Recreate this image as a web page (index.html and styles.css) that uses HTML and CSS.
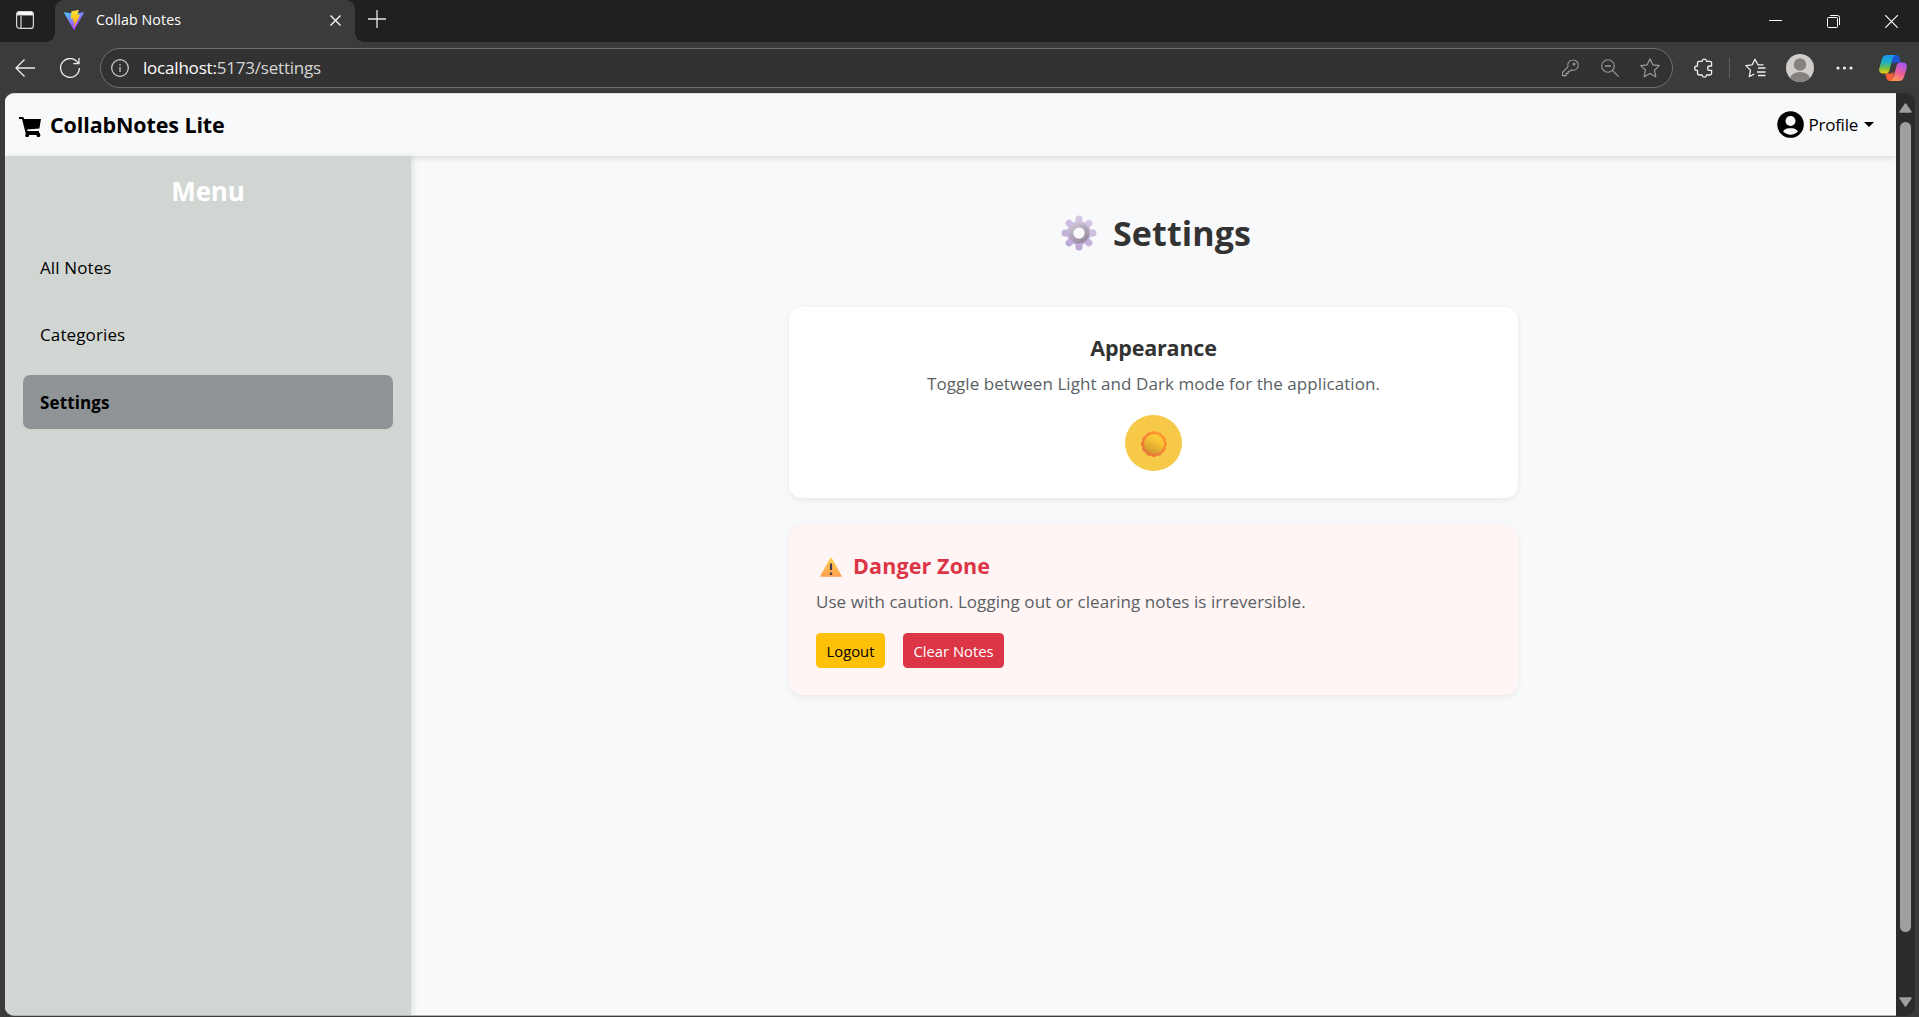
FILE: index.html
```html
<!DOCTYPE html>
<html lang="en">
<head>
<meta charset="utf-8">
<title>Collab Notes</title>
<link rel="stylesheet" href="styles.css">
</head>
<body>
<header class="tabstrip">
  <button class="tab-actions" aria-label="Tab actions">
    <svg width="20" height="20" viewBox="0 0 20 20" fill="none" stroke="#d8d8d8" stroke-width="1.2"><rect x="1.6" y="1.6" width="16.8" height="16.8" rx="3"/><path d="M2 5h16V4a2.400 2.400 0 0 0-2.400-2.400H4.400A2.400 2.400 0 0 0 2 4z" fill="#fff"/><path d="M6 6v12"/></svg>
  </button>
  <div class="tab">
    <svg class="favicon" width="20" height="20" viewBox="0 0 256 257"><defs><linearGradient id="va" x1="0" y1="0" x2=".6" y2="1"><stop offset="0" stop-color="#41d1ff"/><stop offset="1" stop-color="#bd34fe"/></linearGradient><linearGradient id="vb" x1=".4" y1="0" x2=".5" y2="1"><stop offset="0" stop-color="#ffea83"/><stop offset=".1" stop-color="#ffdd35"/><stop offset="1" stop-color="#ffa800"/></linearGradient></defs><path fill="url(#va)" d="M255 38 134 252c-2.500 4.500-9 4.500-11.500 0L1 38c-3-5 1.500-11 7-10l120 21 118-21c6-1 10 5 9 10Z"/><path fill="url(#vb)" d="M185 0 97 17c-1.500.3-2.500 1.500-2.500 3l-5.500 92c0 2 2 4 4 3.500l24.500-5.700c2.300-.5 4.400 1.500 4 3.800l-7.300 35.700c-.5 2.400 1.800 4.500 4.100 3.700l15.200-4.600c2.400-.7 4.600 1.400 4.100 3.700l-11.600 56c-.7 3.500 4 5.400 5.900 2.400l1.300-2 72-143.700c1.200-2.400-.9-5.100-3.500-4.600l-25.300 4.900c-2.400.5-4.400-1.800-3.700-4.100L189.700 4.300C190.400 2 188.300-.5 185 0Z"/></svg>
    <span class="tab-title">Collab Notes</span>
    <svg class="tab-close" width="11" height="11" viewBox="0 0 11 11" stroke="#fff" stroke-width="1.300"><path d="M.5.5l10 10M10.500.5l-10 10"/></svg>
  </div>
  <svg class="new-tab" width="18" height="18" viewBox="0 0 18 18" stroke="#e8e8e8" stroke-width="1.300"><path d="M9 0v18M0 9h18"/></svg>
  <div class="window-controls">
    <svg width="13" height="13" viewBox="0 0 13 13" stroke="#fff"><path d="M0 5.500h13"/></svg>
    <svg width="13" height="13" viewBox="0 0 13 13" fill="none" stroke="#fff"><rect x=".5" y="2.500" width="10" height="10" rx="1"/><path d="M3 .5h7.500a2 2 0 0 1 2 2V10"/></svg>
    <svg width="13" height="13" viewBox="0 0 13 13" stroke="#fff" stroke-width="1.200"><path d="M.3.300l12.400 12.400M12.700.3.300 12.700"/></svg>
  </div>
</header>
<nav class="toolbar">
  <svg class="back" width="20" height="18" viewBox="0 0 20 18" fill="none" stroke="#eee" stroke-width="1.300"><path d="M20 9H1M9.500.5 1 9l8.500 8.500"/></svg>
  <svg class="reload" width="20" height="20" viewBox="0 0 20 20" fill="none" stroke="#eee" stroke-width="1.300"><path d="M18.300 5.500A9.400 9.400 0 1 0 19.400 10M19 0v5.700h-5.700"/></svg>
  <div class="omnibox">
    <svg class="info" width="18" height="18" viewBox="0 0 18 18" fill="none" stroke="#d0d0d0" stroke-width="1.200"><circle cx="9" cy="9" r="8.300"/><path d="M9 8v5M9 5v1.500"/></svg>
    <span class="url"><span class="host">localhost:</span>5173/settings</span>
    <div class="omni-icons">
      <svg width="18" height="18" viewBox="0 0 18 18" fill="none" stroke="#9b9b9b" stroke-width="1.100"><path d="M10.500 1a5.300 5.300 0 0 0-4.600 6.800L.6 13.300V16.600h3.600v-2.200h2v-2.100h1.700l1.300-1.300A5.200 5.200 0 1 0 10.500 1Z"/><circle cx="12" cy="5.200" r=".9"/></svg>
      <svg width="18" height="18" viewBox="0 0 18 18" fill="none" stroke="#9b9b9b" stroke-width="1.100"><circle cx="7" cy="7" r="6.300"/><path d="M4 7h6" stroke-width="1.500"/><path d="M11.600 11.600l6 6"/></svg>
      <svg width="20" height="20" viewBox="0 0 20 20" fill="none" stroke="#9b9b9b" stroke-width="1.200" stroke-linejoin="round"><path d="m10 .8 2.800 6 6.500.8-4.800 4.500 1.300 6.600L10 15.500l-5.800 3.200 1.300-6.600L.7 7.600l6.500-.8z"/></svg>
    </div>
  </div>
  <svg class="puzzle" width="20" height="20" viewBox="0 0 20 20" fill="none" stroke="#eee" stroke-width="1.300" stroke-linejoin="round"><path d="M5.200 3.300h3V2.900a2.200 2.200 0 0 1 4.300 0v.4h3.400q1.700 0 1.700 1.700v3h-1.800a2.200 2.200 0 0 0 0 4.400h1.800v2.900q0 1.700-1.700 1.700h-3.400v.4a2.200 2.200 0 0 1-4.300 0V17h-3q-1.700 0-1.700-1.700v-2.900h-.6a2.200 2.200 0 0 1 0-4.400h.6V5q0-1.700 1.700-1.700z"/></svg>
  <span class="divider"></span>
  <svg class="favs" width="21" height="20" viewBox="0 0 21 20" fill="none" stroke="#eee" stroke-width="1.300" stroke-linejoin="round"><path d="M18.500 6.800h-5.600L10 1.200 7.200 6.800l-6.400.8 4.700 4.500-1.200 6.500 5-2.600"/><path d="M13 10h7.500M12 14h8.500M13 17.500h7.500"/></svg>
  <svg class="avatar" width="28" height="28" viewBox="0 0 28 28"><defs><clipPath id="av"><circle cx="14" cy="14" r="14"/></clipPath></defs><g clip-path="url(#av)"><rect width="28" height="28" fill="#d0cdca"/><circle cx="14" cy="10.500" r="6.200" fill="#87827f"/><ellipse cx="14" cy="25" rx="10" ry="7" fill="#87827f"/></g></svg>
  <svg class="dots" width="17" height="4" viewBox="0 0 17 4" fill="#eee"><circle cx="2" cy="2" r="1.600"/><circle cx="8.500" cy="2" r="1.600"/><circle cx="15" cy="2" r="1.600"/></svg>
  <svg class="copilot" width="28" height="26" viewBox="0 0 28 26"><defs><linearGradient id="ca" x1="0" y1="0" x2="0" y2="1"><stop offset="0" stop-color="#1b96f0"/><stop offset=".4" stop-color="#1eb0c5"/><stop offset=".7" stop-color="#6fc045"/><stop offset="1" stop-color="#f4c912"/></linearGradient><linearGradient id="cb" x1=".6" y1="0" x2=".2" y2="1"><stop offset="0" stop-color="#a855f0"/><stop offset=".5" stop-color="#ee5e9b"/><stop offset="1" stop-color="#ffa04a"/></linearGradient></defs><path fill="#1b55d6" d="M13 0h4.500c1.700 0 2.500 1.200 3 3l1.400 4.500H17c-2 0-2.700 1-3.200 2.600z"/><path fill="#f4603a" d="M15 26h-4.500c-1.700 0-2.500-1.200-3-3L6.100 18.500H11c2 0 2.700-1 3.200-2.600z"/><path fill="url(#ca)" d="M8 0h9c-2 0-2.800 1.500-3.400 3.500L10.500 15c-.6 2.300-1.500 3.500-3.500 3.500H4c-3 0-4.500-2-3.700-5.500L3 4C3.800 1.300 5.300 0 8 0Z"/><path fill="url(#cb)" d="M20 26h-9c2 0 2.800-1.500 3.400-3.500L17.500 11c.6-2.300 1.500-3.500 3.500-3.500h3c3 0 4.500 2 3.700 5.500L25 22c-.8 2.700-2.300 4-5 4Z"/></svg>
</nav>
<div class="viewport">
  <div class="app">
    <div class="navbar">
      <div class="brand">
        <svg width="22" height="20" viewBox="0 0 22 20"><path d="M0 0h4.300l.8 2H22l-1.600 9.500-12.300 1 .4 1.500H20v2h1v1.200a1.900 1.900 0 1 1-3.400.8H10a1.900 1.900 0 1 1-3.400-.5V16L3 2H0z"/></svg>
        <span class="brand-text">CollabNotes Lite</span>
      </div>
      <div class="profile">
        <svg width="27" height="27" viewBox="0 0 27 27"><circle cx="13.500" cy="13.500" r="13.300"/><circle cx="13.500" cy="10" r="5" fill="#f8f9fb"/><path fill="#f8f9fb" d="M6 20.500c1.800-2.800 4.500-3.200 7.500-3.200s5.700.4 7.500 3.200c-2 2-4.500 3.200-7.500 3.200S8 22.500 6 20.500Z"/></svg>
        <span class="profile-text">Profile</span>
        <span class="caret"></span>
      </div>
    </div>
    <div class="body">
      <aside class="sidebar">
        <h2>Menu</h2>
        <a class="item">All Notes</a>
        <a class="item">Categories</a>
        <a class="item active">Settings</a>
      </aside>
      <main class="content">
        <h1>
          <svg width="36" height="36" viewBox="-18 -18 36 36"><defs><linearGradient id="gb" x1=".2" y1="0" x2=".8" y2="1"><stop offset="0" stop-color="#c9bfcf"/><stop offset="1" stop-color="#978b9e"/></linearGradient><linearGradient id="ga" gradientUnits="userSpaceOnUse" x1="8" y1="-18" x2="-8" y2="18"><stop offset="0" stop-color="#d9cee6"/><stop offset="1" stop-color="#b8a3d3"/></linearGradient></defs><path stroke="url(#ga)" stroke-width="7" stroke-linecap="round" d="M0-14V14M-14.010 0H14M-9.900-9.900 9.900 9.900M9.900-9.900-9.900 9.900"/><circle r="12" fill="url(#ga)"/><circle r="8" fill="none" stroke="url(#gb)" stroke-width="5"/><circle r="5.600" fill="#fafafc"/></svg>
          <span>Settings</span>
        </h1>
        <section class="card appearance">
          <h3>Appearance</h3>
          <p>Toggle between Light and Dark mode for the application.</p>
          <button class="toggle" aria-label="Toggle theme">
            <svg width="28" height="28" viewBox="-14 -14 28 28"><defs><linearGradient id="sa" x1=".8" y1="0" x2=".3" y2="1"><stop offset="0" stop-color="#ffd23a"/><stop offset=".4" stop-color="#f5c234"/><stop offset="1" stop-color="#cf9330"/></linearGradient><linearGradient id="sb" gradientUnits="userSpaceOnUse" x1="10" y1="-10" x2="-10" y2="10"><stop offset="0" stop-color="#ff9a2e"/><stop offset="1" stop-color="#e9703a"/></linearGradient></defs><path fill="url(#sb)" stroke="url(#sb)" stroke-width="1" stroke-linejoin="round" d="M0-12.800 3-11.200 6.400-11.080 8.200-8.200 11.080-6.400 11.200-3 12.800 0 11.200 3 11.080 6.400 8.200 8.200 6.400 11.080 3 11.200 0 12.800-3 11.200-6.400 11.080-8.200 8.200-11.080 6.400-11.200 3-12.800 0-11.200-3-11.080-6.400-8.200-8.200-6.400-11.080-3-11.200Z"/><circle r="10" fill="url(#sa)"/></svg>
          </button>
        </section>
        <section class="card danger">
          <h3>
            <svg width="22" height="20" viewBox="0 0 22 20"><defs><linearGradient id="wa" x1="0" y1="0" x2="0" y2="1"><stop offset="0" stop-color="#ffd254"/><stop offset="1" stop-color="#ffa050"/></linearGradient></defs><path d="M11 1.200 21 19H1z" fill="url(#wa)" stroke="url(#wa)" stroke-width="1.500" stroke-linejoin="round"/><path d="M11 6.500v6.500M11 15.600v2.300" stroke="#463c4e" stroke-width="2.200"/></svg>
            <span>Danger Zone</span>
          </h3>
          <p>Use with caution. Logging out or clearing notes is irreversible.</p>
          <div class="actions">
            <button class="btn warn">Logout</button>
            <button class="btn del">Clear Notes</button>
          </div>
        </section>
      </main>
    </div>
  </div>
  <div class="scrollbar">
    <svg width="13" height="10" viewBox="0 0 13 10" fill="#9f9f9f"><path d="M6.500 1 12 9H1z" stroke="#9f9f9f" stroke-width="1.500" stroke-linejoin="round"/></svg>
    <span class="thumb"></span>
    <svg width="13" height="10" viewBox="0 0 13 10" fill="#9f9f9f"><path d="M6.500 9 12 1H1z" stroke="#9f9f9f" stroke-width="1.500" stroke-linejoin="round"/></svg>
  </div>
</div>
</body>
</html>
```
FILE: styles.css
```css
* { box-sizing: border-box; }
body {
  margin: 0;
  width: 1919px;
  height: 1017px;
  overflow: hidden;
  display: flex;
  flex-direction: column;
  background: #3b3b3b;
  color: #000;
  font-family: "Open Sans", "Noto Sans", sans-serif;
  font-size: 17px;
}
button { font: inherit; border: 0; padding: 0; background: none; }
svg { display: block; flex: none; }
span { white-space: nowrap; }
h1, h2, h3, p { margin: 0; }

.tabstrip { display: flex; height: 42px; background: #202020; flex: none; }
.tab-actions { width: 55px; background: #202020; border-radius: 0 0 9px 0; padding-left: 15px; display: flex; align-items: center; padding-bottom: 2px; }
.tab { position: relative; width: 300px; background: #3b3b3b; border-radius: 9px 9px 0 0; display: flex; align-items: center; padding: 0 14px 2px 9px; color: #fff; }
.tab::before, .tab::after { content: ""; position: absolute; bottom: 0; width: 9px; height: 9px; }
.tab::before { left: -9px; background: radial-gradient(circle at 0 0, #202020 8.500px, #3b3b3b 9px); }
.tab::after { right: -9px; background: radial-gradient(circle at 100% 0, #202020 8.500px, #3b3b3b 9px); }
.tab-title { margin-left: 12px; font-size: 14.200px; letter-spacing: .1px; flex: 1; padding-bottom: 2px; }
.new-tab { margin: 10px 0 0 13px; }
.window-controls { margin-left: auto; display: flex; gap: 45px; padding: 15px 21px 0 0; }

.toolbar { display: flex; align-items: center; height: 51px; padding: 1px 12px 0 15px; flex: none; }
.reload { margin-left: 25px; }
.omnibox { display: flex; align-items: center; margin-left: 20px; width: 1573px; height: 40px; border: 1px solid #707070; border-radius: 20px; background: #323232; padding: 0 12px 0 10px; }
.url { margin-left: 14px; color: #d6d6d6; font-size: 17px; letter-spacing: -.2px; padding-bottom: 2px; }
.host { color: #fff; }
.omni-icons { margin-left: auto; display: flex; align-items: center; gap: 21px; }
.puzzle { margin-left: 21px; }
.divider { width: 1px; height: 20px; background: #606060; margin-left: 15px; }
.favs { margin-left: 15px; }
.avatar { margin-left: 20px; }
.dots { margin-left: 22px; }
.copilot { margin-left: 26px; }

.viewport { display: flex; height: 923px; padding: 0 4px 0 5px; flex: none; }
.app { width: 1891px; background: #f8f9fb; border-radius: 9px 0 0 9px; overflow: hidden; display: flex; flex-direction: column; border-top: 1px solid #dcdddf; border-bottom: 1px solid #b0b2b2; }
.navbar { position: relative; height: 62px; flex: none; display: flex; justify-content: space-between; align-items: center; padding: 0 22px 0 14px; background: #f8f9fb; box-shadow: 0 2px 6px rgba(0, 0, 0, .12); }
.brand { display: flex; align-items: center; gap: 9px; font-weight: 700; font-size: 21.500px; letter-spacing: -.12px; }
.brand svg { margin-top: 3px; }
.brand-text { padding-bottom: 2px; }
.profile { display: flex; align-items: center; padding-bottom: 1px; }
.profile-text { margin: 0 6px 0 5px; padding-bottom: 1px; letter-spacing: -.25px; }
.caret { border: 5px solid transparent; border-top-color: #000; border-bottom: 0; }
.body { flex: 1; display: flex; }
.sidebar { position: relative; width: 406px; background: #d2d6d2; padding: 18px; box-shadow: 2px 0 6px rgba(0, 0, 0, .1); }
.sidebar h2 { text-align: center; color: #fff; font-size: 26px; line-height: 34px; letter-spacing: -.2px; margin-bottom: 32px; }
.item { display: flex; align-items: center; height: 54px; margin-bottom: 13.500px; padding-left: 17px; border-radius: 7px; width: 370px; letter-spacing: .12px; }
.active { background: #8f9496; font-weight: 700; }

.content { flex: 1; display: flex; flex-direction: column; align-items: center; padding-top: 55px; }
h1 { display: flex; align-items: center; gap: 16px; height: 44px; font-size: 34px; color: #333; margin-bottom: 52px; padding-left: 5px; letter-spacing: .1px; }
.card { width: 729px; border-radius: 13px; box-shadow: 0 2px 6px rgba(0, 0, 0, .07); padding: 27px; }
.card h3 { font-size: 21.500px; line-height: 27px; color: #333; }
.card p { color: #5a5f64; line-height: 27px; margin-top: 9px; letter-spacing: .065px; }
.appearance { height: 191px; background: #fff; display: flex; flex-direction: column; align-items: center; margin-bottom: 27px; }
.appearance h3 { letter-spacing: -.2px; }
.toggle { width: 57px; height: 56px; margin-top: 18px; padding-top: 2px; border-radius: 28px; background: #f7c948; display: flex; align-items: center; justify-content: center; }
.danger { height: 170px; background: #fff5f5; }
.danger h3 { display: flex; align-items: center; gap: 11px; padding-left: 4px; color: #dc3545; letter-spacing: .12px; }
.danger h3 svg { margin-top: 2px; }
.actions { display: flex; gap: 18px; margin-top: 18px; }
.btn { height: 35px; border-radius: 4.500px; font-size: 14.800px; display: flex; align-items: center; justify-content: center; }
.warn { width: 69px; background: #ffc107; }
.del { width: 101px; background: #dc3545; color: #fff; }

.scrollbar { width: 19px; background: #2c2c2c; border-radius: 0 9px 9px 0; display: flex; flex-direction: column; align-items: center; padding: 10px 0 9px; }
.thumb { width: 11px; height: 810px; border-radius: 6px; background: #9f9f9f; margin: 9px 0 auto; }
```
